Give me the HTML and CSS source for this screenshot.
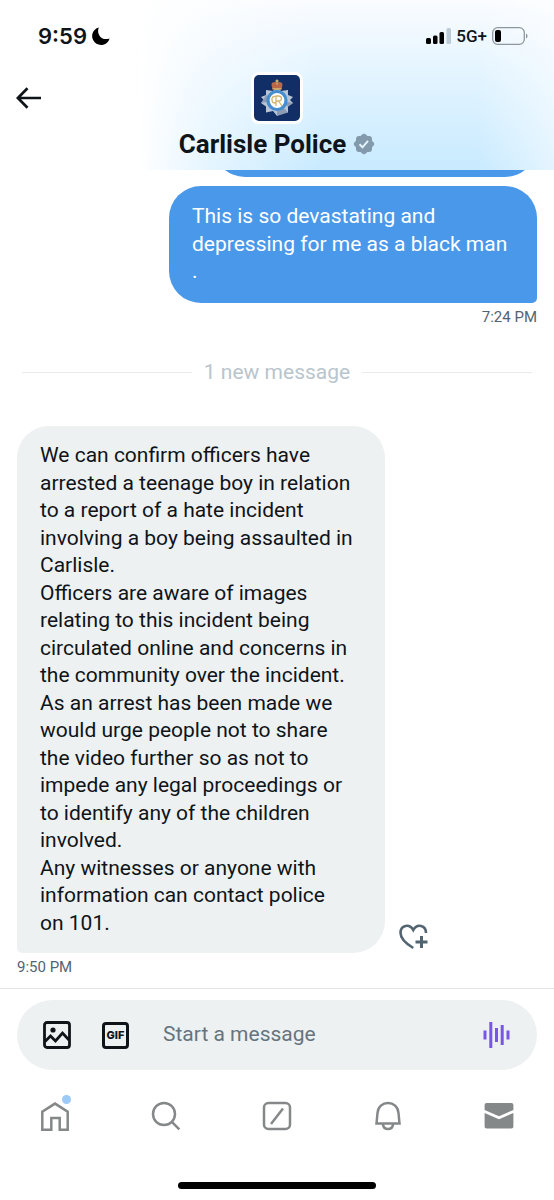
FILE: index.html
```html
<!DOCTYPE html>
<html lang="en">
<head>
  <meta charset="UTF-8" />
  <meta name="viewport" content="width=device-width, initial-scale=1.0">
  <title>Carlisle Police | Messages</title>
  <link rel="stylesheet" href="styles.css">
</head>
<body>
  <header class="header">
    <div class="status-bar">
      <div class="status-left">
        <span class="clock">9:59</span>
        <svg width="18" height="18" viewBox="0 0 18 18" aria-hidden="true"><path d="M6.800.4A8.900 8.900 0 1 0 17.600 11.500C15 12.500 11 12.500 8.500 10 5.800 7.200 5.600 3.500 6.800.4Z"/></svg>
      </div>
      <div class="status-right">
        <svg width="25" height="16" viewBox="0 0 25 16" aria-hidden="true">
          <rect x="0" y="10" width="5" height="6" rx="1.500"/>
          <rect x="7" y="7.500" width="4.500" height="8.500" rx="1.500"/>
          <rect x="13.500" y="4" width="4.500" height="12" rx="1.500"/>
          <rect x="20.500" y="0" width="4.500" height="16" rx="1.500" fill="#bccbd5"/>
        </svg>
        <span class="network">5G+</span>
        <svg width="36" height="18" viewBox="0 0 36 18" aria-hidden="true">
          <rect x=".7" y=".7" width="31.600" height="16.600" rx="5" fill="none" stroke="#8d979e" stroke-width="1.300"/>
          <rect x="3" y="3" width="6" height="12" rx="2"/>
          <path d="M34 6.500c2 .8 2 4.200 0 5Z" fill="#8d979e"/>
        </svg>
      </div>
    </div>
    <div class="profile-bar">
      <button class="icon-btn back-btn" type="button" aria-label="Back">
        <svg width="26" height="22" viewBox="0 0 26 22" fill="none" stroke="#0f1419" stroke-width="2.700"><path d="M25 11H2M11.500 1.300 1.900 11l9.600 9.700"/></svg>
      </button>
      <div class="avatar">
        <svg width="46" height="46" viewBox="0 0 46 46" aria-hidden="true">
          <rect width="46" height="46" rx="5" fill="#112f66"/>
          <path d="M23 41l-4-5-7 1.500v-6L7 28l3-3-3-3 5-2v-5l7 1 4-4 4 4 7-1v5l5 2-3 3 3 3-5 3.500v6L27 36Z" fill="#b9c5d5"/>
          <path d="M23 41V25l11 12.500ZM23 25l16 3-5 3.500ZM23 25 7 28l5-8Z" fill="#8c9cb4"/>
          <path d="M18.500 14.500 17.500 10c-.5-3 4-4 5.500-2 1.500-2 6-1 5.500 2l-1 4.500Z" fill="#b9684a"/>
          <path d="M18.500 13.800h9M23 4.500v5M21.500 6h3" stroke="#d8b86c" stroke-width="1.300"/>
          <circle cx="23" cy="25.500" r="9" fill="#fff" stroke="#468dce" stroke-width="3.200"/>
          <path d="M22.500 22.500c-3.500-3-5 .5-4.500 3 .6 3 3 3 4.500 1.500M22 31V21h2.500c4 0 4 5 0 5H22m2.500 0 3.500 5" fill="none" stroke="#d6b56c" stroke-width="1.300"/>
        </svg>
      </div>
    </div>
    <div class="title-row">
      <h1>Carlisle Police</h1>
      <svg width="22" height="22" viewBox="0 0 22 22" role="img" aria-label="Verified">
        <g fill="#829aab">
          <rect x="3" y="3" width="16" height="16" rx="3"/>
          <rect x="3" y="3" width="16" height="16" rx="3" transform="rotate(45 11 11)"/>
        </g>
        <path d="m6.500 11.300 3 3 5.500-6.500" fill="none" stroke="#e3f3fd" stroke-width="2"/>
      </svg>
    </div>
  </header>

  <main class="thread">
    <div class="bubble sent earlier"></div>
    <div class="bubble sent">This is so devastating and depressing for me as a black man<br>.</div>
    <time class="time time-sent">7:24 PM</time>

    <div class="divider"><span>1 new message</span></div>

    <div class="received-row">
      <div class="bubble received">
        <p>We can confirm officers have arrested a teenage boy in relation to a report of a hate incident involving a boy being assaulted in Carlisle.</p>
        <p>Officers are aware of images relating to this incident being circulated online and concerns in the community over the incident.</p>
        <p>As an arrest has been made we would urge people not to share the video further so as not to impede any legal proceedings or to identify any of the children involved.</p>
        <p>Any witnesses or anyone with information can contact police<br>on 101.</p>
      </div>
      <button class="icon-btn react-btn" type="button" aria-label="Add reaction">
        <svg width="30" height="26" viewBox="0 0 30 26" fill="none" stroke="#536471" stroke-width="2.600">
          <path d="M14.300 24C8 20.300 1.500 15 1.500 8.800 1.500 1 10.500-.8 14.300 6 18-.8 27 1 27 9"/>
          <path d="M22.500 12v12M16.500 18h12" stroke-width="3"/>
        </svg>
      </button>
    </div>
    <time class="time">9:50 PM</time>
  </main>

  <form class="composer">
    <div class="composer-box">
      <button class="icon-btn" type="button" aria-label="Add photo">
        <svg width="28" height="28" viewBox="0 0 28 28" fill="none" stroke="#0f1419" stroke-width="2.800">
          <rect x="1.500" y="1.500" width="25" height="25" rx="2.500"/>
          <path d="m2 20.500 5.500-5.500 5 5 7-8 6.500 7"/>
          <circle cx="10" cy="9" r="2.600" fill="#0f1419" stroke="none"/>
        </svg>
      </button>
      <button class="icon-btn gif-btn" type="button">GIF</button>
      <input class="composer-input" type="text" placeholder="Start a message" aria-label="Start a message">
      <button class="icon-btn" type="button" aria-label="Record voice message">
        <svg width="28" height="28" viewBox="0 0 28 28" stroke="#7856e8" stroke-width="3"><path d="M2 9.500v9M7.800 1v26M13.500 7v14M19.200 4v20M25 9.500v9"/></svg>
      </button>
    </div>
  </form>

  <nav class="tabs" aria-label="Main">
    <a href="#home" class="tab" aria-label="Home">
      <svg width="30" height="30" viewBox="0 0 30 30"><path d="M2.300 28.700v-18L15 2.600l12.700 8.100v18h-8V17h-8.400v11.700Z"/></svg>
      <span class="dot"></span>
    </a>
    <a href="#search" class="tab" aria-label="Search">
      <svg width="30" height="30" viewBox="0 0 30 30"><circle cx="13" cy="13" r="11"/><path d="m20.800 20.800 7.500 7.500"/></svg>
    </a>
    <a href="#grok" class="tab" aria-label="Grok">
      <svg width="30" height="30" viewBox="0 0 30 30"><rect x="2" y="2" width="26" height="26" rx="4.500"/><path d="M9 23 21 7.500"/></svg>
    </a>
    <a href="#notifications" class="tab" aria-label="Notifications">
      <svg width="30" height="30" viewBox="0 0 30 30"><path d="m3.500 22.500 1-10.500C5 5.800 9.500 2 15 2s10 3.800 10.500 10l1 10.500Z"/><path d="M9.800 23c1 6.800 9.400 6.800 10.400 0"/></svg>
    </a>
    <a href="#messages" class="tab tab-active" aria-label="Messages">
      <svg width="30" height="30" viewBox="0 0 30 30"><path d="M.6 9V4.200C.6 2.700 1.300 2 2.800 2h24.400c1.500 0 2.200.7 2.200 2.200V9L15 15.300ZM.6 12 15 18.300 29.400 12v13.300c0 1.500-.7 2.200-2.200 2.200H2.800c-1.500 0-2.200-.7-2.200-2.200Z"/></svg>
    </a>
  </nav>
  <div class="home-indicator"></div>
</body>
</html>
```

FILE: styles.css
```css
* {
  box-sizing: border-box;
}

body {
  display: flex;
  flex-direction: column;
  height: 100vh;
  margin: 0;
  background: #fff;
  color: #0f1419;
  font-family: Roboto, "Liberation Sans", sans-serif;
  font-size: 21px;
  line-height: 1.31;
}

svg {
  display: block;
}

h1,
p {
  margin: 0;
}

.icon-btn {
  padding: 0;
  border: none;
  background: none;
  cursor: pointer;
}

/* Header */
.header {
  flex: none;
  height: 170px;
  background:
    linear-gradient(to right, #fff 25%, rgba(255,255,255,0.5) 38%, rgba(255,255,255,0) 58%, rgba(255,255,255,0) 86%, rgba(255,255,255,0.5) 100%),
    linear-gradient(to bottom, #fafcff 0%, #e0f3ff 50%, #c8eaff 100%);
}

.status-bar {
  display: flex;
  justify-content: space-between;
  align-items: center;
  height: 72px;
  padding: 0 26px 0 38px;
}

.status-left,
.status-right {
  display: flex;
  align-items: center;
  gap: 5px;
}

.clock {
  font-family: Inter, sans-serif;
  font-size: 22px;
  font-weight: 600;
}

.network {
  font-size: 17px;
  font-weight: 500;
}

.profile-bar {
  display: grid;
  grid-template-columns: 1fr auto 1fr;
  align-items: center;
  padding: 0 16px;
}

.back-btn {
  justify-self: start;
}

.avatar {
  padding: 3px;
  border-radius: 8px;
  background: #fff;
}

.title-row {
  display: flex;
  justify-content: center;
  align-items: center;
  gap: 7px;
  padding-top: 3px;
}

.title-row h1 {
  font-size: 26px;
  font-weight: 700;
}

/* Conversation */
.thread {
  flex: 1;
  display: flex;
  flex-direction: column;
  justify-content: flex-end;
  min-height: 0;
  overflow: hidden;
  padding: 0 17px 10px;
}

.bubble {
  flex: none;
  padding: 16px 23px;
  border-radius: 32px;
}

.sent {
  align-self: flex-end;
  width: 368px;
  max-width: 85%;
  padding: 17px 23px;
  border-bottom-right-radius: 5px;
  background: #4a98e9;
  color: #fff;
}

.earlier {
  width: 324px;
  height: 72px;
  margin-bottom: 9px;
  border-radius: 32px;
}

.received-row {
  display: flex;
  align-items: flex-end;
  gap: 14px;
}

.received {
  width: 368px;
  border-bottom-left-radius: 5px;
  background: #edf1f2;
}

.react-btn {
  padding-bottom: 3px;
}

.time {
  margin-top: 4px;
  color: #536471;
  font-size: 15px;
  line-height: 21px;
}

.time-sent {
  text-align: right;
}

.divider {
  display: flex;
  align-items: center;
  gap: 12px;
  margin: 31px 5px 40px;
  color: #b9c5cd;
}

.divider::before,
.divider::after {
  content: "";
  flex: 1;
  height: 1px;
  background: #e6eaec;
}

/* Composer */
.composer {
  flex: none;
  padding: 11px 17px 0;
  border-top: 1px solid #e1e5e7;
}

.composer-box {
  display: flex;
  align-items: center;
  height: 70px;
  padding: 0 26px;
  border-radius: 35px;
  background: #edf1f2;
}

.gif-btn {
  width: 27px;
  height: 27px;
  margin: 0 34px 0 31px;
  border: 3px solid #0f1419;
  border-radius: 4px;
  color: #0f1419;
  font: 800 11px Inter, sans-serif;
}

.composer-input {
  flex: 1;
  min-width: 0;
  padding: 0;
  border: none;
  outline: none;
  background: none;
  color: #0f1419;
  font: inherit;
}

.composer-input::placeholder {
  color: #66747f;
  opacity: 1;
}

/* Bottom tabs */
.tabs {
  flex: none;
  display: grid;
  grid-template-columns: repeat(5, 1fr);
  justify-items: center;
  padding: 31px 0 51px;
}

.tab {
  position: relative;
}

.tab svg {
  fill: none;
  stroke: #858889;
  stroke-width: 2.5;
}

.tab-active svg {
  fill: #858889;
  stroke: none;
}

.dot {
  position: absolute;
  top: -6px;
  right: -1px;
  width: 9px;
  height: 9px;
  border-radius: 50%;
  background: #9acaf5;
}

.home-indicator {
  flex: none;
  align-self: center;
  width: 198px;
  height: 7px;
  margin-bottom: 11px;
  border-radius: 4px;
  background: #000;
}
```
